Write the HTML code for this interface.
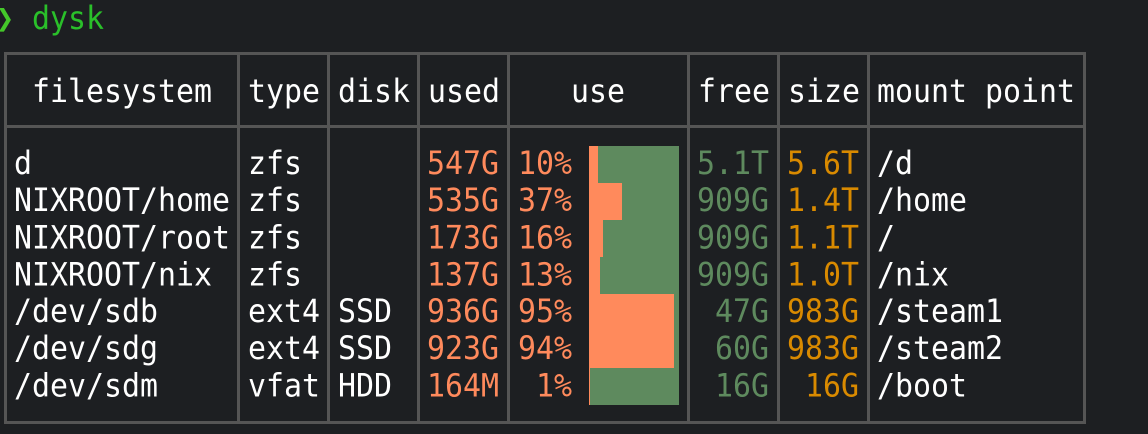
<!DOCTYPE html>
<html><head><meta charset="utf-8"><style>
body{margin:0;width:1148px;height:434px;background:#1d1f22;overflow:hidden;position:relative;font-family:"DejaVu Sans Mono","Liberation Mono",monospace;font-size:29.9px;color:#fff}
.a{position:absolute;white-space:pre;line-height:37px;transform:scaleY(1.08);transform-origin:0 0}
.r{text-align:right}
.b{position:absolute;background:#555}
.o{color:#ff8a5c}.g{color:#5e8a5e}.y{color:#d98a00}
</style></head><body>
<div class="a" style="left:-4px;top:-1px;color:#44c82a;font-weight:bold">❯</div>
<div class="a" style="left:32px;top:-1px;color:#2ac02a">dysk</div>
<div class="b" style="left:4px;top:52px;width:1082px;height:3px"></div>
<div class="b" style="left:4px;top:125px;width:1082px;height:3px"></div>
<div class="b" style="left:4px;top:421px;width:1082px;height:3px"></div>
<div class="b" style="left:4px;top:52px;width:3px;height:372px"></div>
<div class="b" style="left:237px;top:52px;width:3px;height:372px"></div>
<div class="b" style="left:327px;top:52px;width:3px;height:372px"></div>
<div class="b" style="left:417px;top:52px;width:3px;height:372px"></div>
<div class="b" style="left:507px;top:52px;width:3px;height:372px"></div>
<div class="b" style="left:687px;top:52px;width:3px;height:372px"></div>
<div class="b" style="left:777px;top:52px;width:3px;height:372px"></div>
<div class="b" style="left:867px;top:52px;width:3px;height:372px"></div>
<div class="b" style="left:1083px;top:52px;width:3px;height:372px"></div>
<div class="a" style="left:32px;top:72px">filesystem</div>
<div class="a" style="left:248px;top:72px">type</div>
<div class="a" style="left:338px;top:72px">disk</div>
<div class="a" style="left:428px;top:72px">used</div>
<div class="a" style="left:571px;top:72px">use</div>
<div class="a" style="left:698px;top:72px">free</div>
<div class="a" style="left:788px;top:72px">size</div>
<div class="a" style="left:877px;top:72px">mount point</div>
<div class="a" style="left:14px;top:146px;line-height:34.3px">d
NIXROOT/home
NIXROOT/root
NIXROOT/nix
/dev/sdb
/dev/sdg
/dev/sdm</div>
<div class="a" style="left:248px;top:146px;line-height:34.3px">zfs
zfs
zfs
zfs
ext4
ext4
vfat</div>
<div class="a" style="left:338px;top:146px;line-height:34.3px">


 
SSD
SSD
HDD</div>
<div class="a o r" style="left:410px;width:89px;top:146px;line-height:34.3px">547G
535G
173G
137G
936G
923G
164M</div>
<div class="a o r" style="left:500px;width:72px;top:146px;line-height:34.3px">10%
37%
16%
13%
95%
94%
1%</div>
<div class="b" style="left:589px;top:146px;width:90px;height:259px;background:#5e8a5e"></div>
<div class="b" style="left:589px;top:146px;width:9px;height:37px;background:#ff8a5c"></div>
<div class="b" style="left:589px;top:183px;width:33px;height:37px;background:#ff8a5c"></div>
<div class="b" style="left:589px;top:220px;width:14px;height:37px;background:#ff8a5c"></div>
<div class="b" style="left:589px;top:257px;width:11px;height:37px;background:#ff8a5c"></div>
<div class="b" style="left:589px;top:294px;width:85px;height:37px;background:#ff8a5c"></div>
<div class="b" style="left:589px;top:331px;width:85px;height:37px;background:#ff8a5c"></div>
<div class="b" style="left:589px;top:368px;width:1px;height:37px;background:#ff8a5c"></div>
<div class="a g r" style="left:690px;width:79px;top:146px;line-height:34.3px">5.1T
909G
909G
909G
47G
60G
16G</div>
<div class="a y r" style="left:780px;width:79px;top:146px;line-height:34.3px">5.6T
1.4T
1.1T
1.0T
983G
983G
16G</div>
<div class="a" style="left:877px;top:146px;line-height:34.3px">/d
/home
/
/nix
/steam1
/steam2
/boot</div>
</body></html>
